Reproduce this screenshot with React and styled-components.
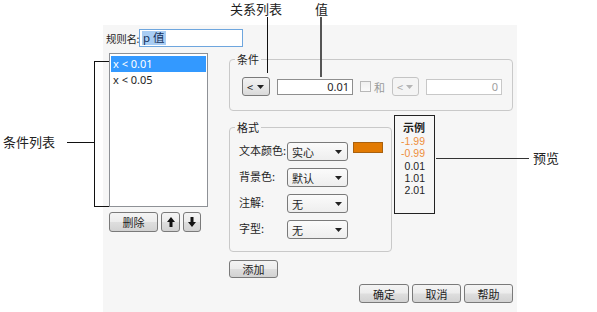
import React from "react";
import styled, { createGlobalStyle } from "styled-components";

const GlobalStyle = createGlobalStyle`
  html, body { margin: 0; padding: 0; background: #ffffff; }
  body { font-family: "Noto Sans", "Noto Sans CJK SC", sans-serif; }
`;

const Page = styled.div`
  position: relative;
  width: 597px;
  height: 312px;
  overflow: hidden;
  display: grid;
  grid-template-columns: 103px 414px;
  grid-template-rows: 25px 287px;
`;

const Dialog = styled.div`
  grid-column: 2;
  grid-row: 2;
  background: #f6f6f6;
  display: flex;
  flex-direction: column;
  font-size: 11px;
  color: #1e1e1e;
`;

const NameRow = styled.div`
  display: flex;
  align-items: center;
  margin-top: 4px;
  padding-left: 3px;
`;

const NameLabel = styled.span`
  width: 33px;
  white-space: nowrap;
  font-family: "Noto Sans CJK SC", sans-serif;
  font-size: 10.5px;
  letter-spacing: -0.3px;
`;

const NameInput = styled.div`
  box-sizing: border-box;
  width: 104px;
  height: 18px;
  border: 1px solid #6ea6de;
  background: #fff;
  padding: 1px 2px;
  display: flex;
  align-items: center;
`;

const Selection = styled.span`
  background: #a9cdf3;
  color: #15305a;
  padding: 0 1px;
  line-height: 14px;
  font-size: 11.5px;
`;

const Body = styled.div`
  display: grid;
  grid-template-columns: 99px 284px;
  column-gap: 21px;
  margin-top: 6px;
  padding-left: 6px;
`;

const LeftCol = styled.div`
  display: flex;
  flex-direction: column;
`;

const ListBox = styled.div`
  box-sizing: border-box;
  height: 154px;
  border: 1px solid #8e9196;
  background: #fff;
  padding: 2px 1px;
`;

const ListItem = styled.div`
  height: 16px;
  line-height: 16px;
  padding-left: 2px;
  font-size: 11px;
  background: ${(p) => (p.$selected ? "#3399ff" : "transparent")};
  color: ${(p) => (p.$selected ? "#ffffff" : "#1e1e1e")};
`;

const ButtonRow = styled.div`
  display: flex;
  gap: ${(p) => p.$gap || 3}px;
  margin-top: 5px;
`;

const Button = styled.button`
  box-sizing: border-box;
  width: ${(p) => p.$w || 50}px;
  height: ${(p) => p.$h || 20}px;
  padding: 0;
  border: 1px solid #7a7a7a;
  border-radius: 3px;
  background: linear-gradient(#f4f4f4 0%, #ececec 48%, #dedede 52%, #d2d2d2 100%);
  font-family: "Noto Sans CJK SC", sans-serif;
  font-size: 11px;
  color: #1e1e1e;
  display: flex;
  align-items: center;
  justify-content: center;
`;

const RightCol = styled.div`
  display: flex;
  flex-direction: column;
`;

const Group = styled.fieldset`
  box-sizing: border-box;
  margin: 0;
  min-inline-size: 0;
  width: ${(p) => p.$w}px;
  border: 1px solid #c9c9c9;
  border-radius: 4px;
  padding: ${(p) => p.$pad};
`;

const Legend = styled.legend`
  padding: 0 2px;
  margin-left: ${(p) => p.$offset}px;
  font-size: 11px;
  line-height: 13px;
  font-family: "Noto Sans CJK SC", sans-serif;
`;

const CondRow = styled.div`
  display: flex;
  align-items: center;
  gap: 7px;
  height: 19px;
`;

const Combo = styled.div`
  box-sizing: border-box;
  width: ${(p) => p.$w}px;
  height: 19px;
  border: 1px solid ${(p) => (p.$disabled ? "#c4c4c4" : "#7a7a7a")};
  border-radius: 3px;
  background: ${(p) =>
    p.$disabled
      ? "#f4f4f4"
      : p.$light
      ? "linear-gradient(#fbfbfb, #eeeeee)"
      : "linear-gradient(#f2f2f2 0%, #e8e8e8 50%, #d9d9d9 100%)"};
  color: ${(p) => (p.$disabled ? "#a8a8a8" : "#1e1e1e")};
  display: flex;
  align-items: center;
  justify-content: space-between;
  padding: 0 5px 0 4px;
  font-size: 11px;
  font-family: "Noto Sans CJK SC", sans-serif;
`;

const TextBox = styled.div`
  box-sizing: border-box;
  width: 76px;
  height: 16px;
  border: 1px solid ${(p) => (p.$disabled ? "#c8c8c8" : "#8e8e8e")};
  background: #fff;
  color: ${(p) => (p.$disabled ? "#a0a0a0" : "#1e1e1e")};
  text-align: right;
  padding-right: 3px;
  font-size: 11px;
  line-height: 14px;
`;

const CheckLabel = styled.label`
  display: flex;
  align-items: center;
  gap: 3px;
  color: #9a9a9a;
  font-family: "Noto Sans CJK SC", sans-serif;
  font-size: 11px;
`;

const Box = styled.span`
  box-sizing: border-box;
  width: 11px;
  height: 11px;
  border: 1px solid #b8b8b8;
  background: linear-gradient(#f0f0f0, #fafafa);
`;

const FormatRowWrap = styled.div`
  display: flex;
  align-items: flex-start;
  gap: 2px;
  margin-top: 4px;
`;

const FormatGroup = styled(Group)`
  margin-top: 6px;
`;

const FormatGrid = styled.div`
  display: grid;
  grid-template-columns: 48px 61px auto;
  row-gap: 7px;
  align-items: start;
`;

const FieldLabel = styled.span`
  line-height: 16px;
  font-size: 11px;
  font-family: "Noto Sans CJK SC", sans-serif;
  white-space: nowrap;
`;

const Swatch = styled.span`
  box-sizing: border-box;
  width: 30px;
  height: 11px;
  margin-left: 5px;
  background: #e27a02;
  border: 1px solid #a9610f;
`;

const Preview = styled.div`
  box-sizing: border-box;
  width: 41px;
  height: 99px;
  border: 1px solid #222;
  padding: 4px 9px 0 0;
  display: flex;
  flex-direction: column;
  align-items: flex-end;
`;

const PreviewHead = styled.div`
  align-self: center;
  padding-left: 8px;
  font-weight: bold;
  font-family: "Noto Sans CJK SC", sans-serif;
  font-size: 11px;
  line-height: 14px;
  margin-bottom: 1px;
`;

const PreviewValue = styled.div`
  font-family: "Liberation Sans", sans-serif;
  font-size: 10.5px;
  line-height: 12.3px;
  height: 12.3px;
  color: ${(p) => (p.$neg ? "#ee8f3c" : "#1e1e1e")};
`;

const AddRow = styled.div`
  margin-top: 8px;
`;

const Footer = styled.div`
  display: flex;
  justify-content: flex-end;
  gap: 3px;
  margin-top: 6px;
  padding-right: 4px;
`;

/* ---- callouts overlaid on the screenshot ---- */
const CalloutText = styled.span`
  position: absolute;
  left: ${(p) => p.$x}px;
  top: ${(p) => p.$y}px;
  font-family: "Noto Sans CJK SC", sans-serif;
  font-size: 13px;
  line-height: 16px;
  color: #222;
  white-space: nowrap;
`;

const Line = styled.span`
  position: absolute;
  left: ${(p) => p.$x}px;
  top: ${(p) => p.$y}px;
  width: ${(p) => p.$w}px;
  height: ${(p) => p.$h}px;
  background: ${(p) => p.$c || "#111"};
`;

const Arrow = ({ dir }) => (
  <svg width="8" height="10" viewBox="0 0 8 10">
    {dir === "up" ? (
      <path d="M4 0 L8 5 L5.5 5 L5.5 10 L2.5 10 L2.5 5 L0 5 Z" fill="#111" />
    ) : (
      <path d="M4 10 L8 5 L5.5 5 L5.5 0 L2.5 0 L2.5 5 L0 5 Z" fill="#111" />
    )}
  </svg>
);

const Caret = ({ color = "#222" }) => (
  <svg width="7" height="4" viewBox="0 0 7 4">
    <path d="M0 0 L7 0 L3.5 4 Z" fill={color} />
  </svg>
);

const formatRows = [
  { label: "文本颜色:", value: "实心", swatch: true },
  { label: "背景色:", value: "默认" },
  { label: "注解:", value: "无" },
  { label: "字型:", value: "无" },
];

const previewValues = ["-1.99", "-0.99", "0.01", "1.01", "2.01"];

export default function App() {
  return (
    <>
      <GlobalStyle />
      <Page>
        <Dialog>
          <NameRow>
            <NameLabel>规则名:</NameLabel>
            <NameInput>
              <Selection>p 值</Selection>
            </NameInput>
          </NameRow>
          <Body>
            <LeftCol>
              <ListBox>
                <ListItem $selected>x &lt; 0.01</ListItem>
                <ListItem>x &lt; 0.05</ListItem>
              </ListBox>
              <ButtonRow $gap={3}>
                <Button $w={49} $h={20}>删除</Button>
                <Button $w={19} $h={20}><Arrow dir="up" /></Button>
                <Button $w={18} $h={20}><Arrow dir="down" /></Button>
              </ButtonRow>
            </LeftCol>
            <RightCol>
              <Group $w={284} $pad="11px 8px 14px 12px">
                <Legend $offset={-7}>条件</Legend>
                <CondRow>
                  <Combo $w={28}>
                    <span>&lt;</span>
                    <Caret />
                  </Combo>
                  <TextBox>0.01</TextBox>
                  <CheckLabel>
                    <Box />
                    和
                  </CheckLabel>
                  <Combo $w={27} $disabled>
                    <span>&lt;</span>
                    <Caret color="#b5b5b5" />
                  </Combo>
                  <TextBox $disabled>0</TextBox>
                </CondRow>
              </Group>
              <FormatRowWrap>
                <FormatGroup $w={163} $pad="8px 8px 12px 9px">
                  <Legend $offset={-4}>格式</Legend>
                  <FormatGrid>
                    {formatRows.map((r) => (
                      <React.Fragment key={r.label}>
                        <FieldLabel>{r.label}</FieldLabel>
                        <Combo $w={61} $light>
                          <span>{r.value}</span>
                          <Caret />
                        </Combo>
                        {r.swatch ? <Swatch /> : <span />}
                      </React.Fragment>
                    ))}
                  </FormatGrid>
                </FormatGroup>
                <Preview>
                  <PreviewHead>示例</PreviewHead>
                  {previewValues.map((v) => (
                    <PreviewValue key={v} $neg={v.startsWith("-")}>
                      {v}
                    </PreviewValue>
                  ))}
                </Preview>
              </FormatRowWrap>
              <AddRow>
                <Button $w={49} $h={18}>添加</Button>
              </AddRow>
            </RightCol>
          </Body>
          <Footer>
            <Button $w={50} $h={19}>确定</Button>
            <Button $w={49} $h={19}>取消</Button>
            <Button $w={49} $h={19}>帮助</Button>
          </Footer>
        </Dialog>

        <CalloutText $x={230} $y={1}>关系列表</CalloutText>
        <Line $x={267} $y={17} $w={1} $h={56} />
        <CalloutText $x={315} $y={1}>值</CalloutText>
        <Line $x={320} $y={17} $w={2} $h={60} $c="#555" />

        <CalloutText $x={3} $y={134}>条件列表</CalloutText>
        <Line $x={67} $y={142} $w={28} $h={1} />
        <Line $x={94} $y={61} $w={1} $h={146} />
        <Line $x={94} $y={61} $w={15} $h={1} />
        <Line $x={94} $y={206} $w={15} $h={1} />

        <Line $x={436} $y={158} $w={93} $h={1} $c="#333" />
        <CalloutText $x={533} $y={150}>预览</CalloutText>
      </Page>
    </>
  );
}
